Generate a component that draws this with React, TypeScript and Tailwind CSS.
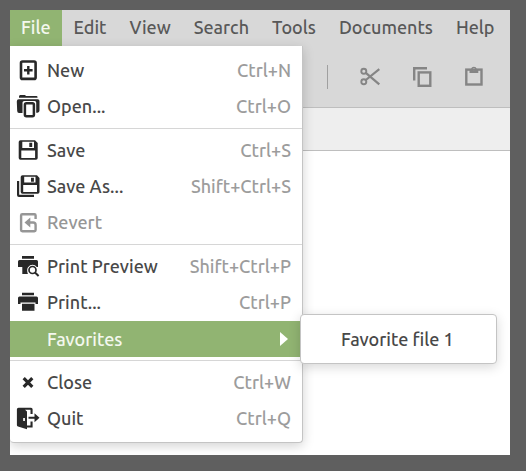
import type { ReactNode } from "react";

const icons = {
  new: (
    <>
      <rect x="5" y="2.5" width="14.6" height="17.4" rx="1.5" fill="none" stroke="currentColor" strokeWidth="2.6" />
      <path d="M12.3 7v8.6M8 11.3h8.6" stroke="currentColor" strokeWidth="2.4" />
    </>
  ),
  open: (
    <>
      <path d="M3 2.800V1.500Q3 0 4.200 0H9l1 1h10.500q1 0 1 1v.8z" fill="currentColor" />
      <path d="M2.800 4.200h18.900q1.800 0 1.800 1.800v9.500q0 2-2 2.300h-1.300V7.500q0-1.500-1.500-1.500H8.200Q6.500 6 6.500 7.500V18H3Q1.300 18 1.200 16L.8 6.500Q.8 4.200 2.800 4.200z" fill="currentColor" />
      <rect x="8.900" y="8.300" width="9" height="13" rx="1.500" fill="none" stroke="currentColor" strokeWidth="2.500" />
    </>
  ),
  save: (
    <path
      fillRule="evenodd"
      fill="currentColor"
      d="M4.500 1.300H19L21.700 4v15q0 1.700-1.700 1.700H4.400q-1.700 0-1.700-1.700V3q0-1.700 1.800-1.700zM6.300 2.700v6.300H18V2.700zM5.300 11.500v7.500h13.800v-7.500zM13.300 3.700h2.900v4.300h-2.900z"
    />
  ),
  saveAs: (
    <>
      <path
        fillRule="evenodd"
        fill="currentColor"
        d="M6.500.3H21L23.500 3v14q0 1.700-1.700 1.700H6.400q-1.700 0-1.700-1.700V2Q4.700.3 6.500.3zM8.200 1.700v5.800h11.300V1.700zM7.200 10v7h13.800v-7zM15 2.700h2.900v4H15z"
      />
      <path d="M2.100 6v14q0 .8.8.8H18" fill="none" stroke="currentColor" strokeWidth="2.200" />
    </>
  ),
  revert: (
    <>
      <path d="M19.600 8V4.500q0-1.200-1.200-1.200H6.300q-1.200 0-1.200 1.200v14.600q0 1.200 1.200 1.200h12.100q1.200 0 1.200-1.200V14q0-2.500-2.500-2.500H13" fill="none" stroke="currentColor" strokeWidth="2.400" />
      <path d="M8.500 11.500l5.800-5v10z" fill="currentColor" />
    </>
  ),
  preview: (
    <>
      <path d="M6 1h12v2.700H6zM3.500 5h17Q22 5 22 6.500V12h-1.200a5.200 5.200 0 0 0-8.500 0H2V6.500Q2 5 3.500 5zM6.300 12h5.800q-1.800 3-.2 7H6.300z" fill="currentColor" />
      <circle cx="16.500" cy="15" r="3.500" fill="none" stroke="currentColor" strokeWidth="1.700" />
      <path d="M19 17.500l3.600 3.400" stroke="currentColor" strokeWidth="2" />
    </>
  ),
  print: (
    <path d="M6 1.700h12v2.600H6zM3.500 5.500h17Q22 5.500 22 7v6h-2.500v-1.500h-15V13H2V7q0-1.500 1.500-1.500zM6 12.700h12.500v7.100H6z" fill="currentColor" />
  ),
  close: <path d="M7.700 7.200l8.600 8.600M16.300 7.200l-8.600 8.600" stroke="currentColor" strokeWidth="3.200" />,
  quit: (
    <>
      <path fillRule="evenodd" fill="currentColor" d="M2.500.7H15q1.600 0 1.600 1.600V7h-2.100V2.700H9L11 4.500V22.200L2 19.500Q.9 19 .9 18V2.300Q.9.700 2.500.7zM7.200 11v3h1.700v-3z" />
      <path d="M11 18.500h3.500v-4h2.100v6H11z" fill="currentColor" />
      <path d="M12.500 9.700h6V6.200l5 4.500-5 4.500v-3.500h-6z" fill="currentColor" />
    </>
  ),
  cut: (
    <g fill="none" stroke="currentColor" strokeWidth="1.900">
      <circle cx="5.800" cy="6.200" r="2.500" />
      <circle cx="5.800" cy="16.700" r="2.500" />
      <path d="M7.800 7.800L21.300 19.300M7.800 15L21.300 4.200" strokeWidth="2.200" />
    </g>
  ),
  copy: (
    <g fill="none" stroke="currentColor" strokeWidth="2.400">
      <path d="M4.200 15.500V3.200H17" />
      <rect x="8.700" y="7.400" width="11.600" height="13.400" />
    </g>
  ),
  paste: (
    <>
      <rect x="4.300" y="4.600" width="15.200" height="14.900" fill="none" stroke="currentColor" strokeWidth="2.400" />
      <path fillRule="evenodd" fill="currentColor" d="M7.500 8V4H9a3 3 0 0 1 5.800 0h1.500v4zM11.900 3a1.200 1.200 0 1 0 .01 0z" />
    </>
  ),
};

type IconName = keyof typeof icons;

function Icon({ name }: { name: IconName }) {
  return (
    <svg viewBox="0 0 24 24" className="size-6 shrink-0 overflow-visible" aria-hidden="true">
      {icons[name]}
    </svg>
  );
}

function MenuItem({ icon, label, shortcut, disabled }: { icon: IconName; label: string; shortcut?: string; disabled?: boolean }) {
  return (
    <button
      type="button"
      role="menuitem"
      disabled={disabled}
      className="flex h-9 w-full items-center pr-[11px] pl-1.5 text-left text-[#484848] disabled:text-[#969696]"
    >
      <span className={disabled ? "" : "text-[#282828]"}>
        <Icon name={icon} />
      </span>
      <span className="ml-[7px] flex-1 pb-0.5">{label}</span>
      {shortcut && <span className="pb-0.5 text-[#9c9c9c]">{shortcut}</span>}
    </button>
  );
}

function Separator() {
  return (
    <div role="separator" className="pt-[3px] pb-1">
      <div className="h-px bg-[#d6d6d6]" />
    </div>
  );
}

function FavoritesItem() {
  return (
    <div className="relative">
      <button
        type="button"
        role="menuitem"
        aria-haspopup="menu"
        aria-expanded="true"
        className="flex h-9 w-full items-center bg-[#91b472] pr-3.5 pl-[37px] text-left text-[#f4f8ef]"
      >
        <span className="flex-1">Favorites</span>
        <svg viewBox="0 0 8 14" className="h-3.5 w-2" aria-hidden="true">
          <path d="M0 0l8 7-8 7z" fill="white" />
        </svg>
      </button>
      <div
        role="menu"
        aria-label="Favorites"
        className="absolute -top-[7px] left-full -ml-0.5 w-[197px] rounded-sm border border-[#c4c4c4] bg-white py-[6px] shadow-[0_3px_12px_rgba(0,0,0,0.16)]"
      >
        <button type="button" role="menuitem" className="h-9 w-full pl-10 text-left text-[#484848]">
          Favorite file 1
        </button>
      </div>
    </div>
  );
}

function FileMenu() {
  return (
    <div
      role="menu"
      aria-label="File"
      className="absolute top-full left-0 z-10 w-[293px] rounded-b-sm border-r border-b border-[#c4c4c4] bg-white pt-[7px] pb-[5px] shadow-[0_3px_12px_rgba(0,0,0,0.18)]"
    >
      <MenuItem icon="new" label="New" shortcut="Ctrl+N" />
      <MenuItem icon="open" label="Open..." shortcut="Ctrl+O" />
      <Separator />
      <MenuItem icon="save" label="Save" shortcut="Ctrl+S" />
      <MenuItem icon="saveAs" label="Save As..." shortcut="Shift+Ctrl+S" />
      <MenuItem icon="revert" label="Revert" disabled />
      <Separator />
      <MenuItem icon="preview" label="Print Preview" shortcut="Shift+Ctrl+P" />
      <MenuItem icon="print" label="Print..." shortcut="Ctrl+P" />
      <FavoritesItem />
      <Separator />
      <MenuItem icon="close" label="Close" shortcut="Ctrl+W" />
      <MenuItem icon="quit" label="Quit" shortcut="Ctrl+Q" />
    </div>
  );
}

function ToolButton({ label, children }: { label: string; children: ReactNode }) {
  return (
    <button type="button" aria-label={label}>
      {children}
    </button>
  );
}

export default function App() {
  return (
    <div className="flex min-h-screen flex-col bg-[#5f5f5f] pt-2.5 pr-4 pb-4 pl-2.5 font-['Ubuntu','Noto_Sans',sans-serif] text-[18px] leading-6 font-medium">
      <main className="flex flex-1 flex-col overflow-hidden bg-white">
        <nav role="menubar" className="relative flex h-9 gap-px bg-[#d8d8d8] text-[#585858]">
          <button type="button" role="menuitem" aria-haspopup="menu" aria-expanded="true" className="bg-[#91b472] px-[11px] pb-0.5 text-[#f4f8ef]">
            File
          </button>
          {["Edit", "View", "Search", "Tools", "Documents", "Help"].map((name) => (
            <button key={name} type="button" role="menuitem" className="px-[11px] pb-0.5">
              {name}
            </button>
          ))}
          <FileMenu />
        </nav>
        <div role="toolbar" className="flex h-[62px] items-center justify-end gap-7 border-b border-[#bebebe] bg-[#d8d8d8] pr-6 text-[#858585]">
          <div className="mr-0.5 h-6 w-px bg-[#a0a0a0]" />
          <ToolButton label="Cut">
            <Icon name="cut" />
          </ToolButton>
          <ToolButton label="Copy">
            <Icon name="copy" />
          </ToolButton>
          <ToolButton label="Paste">
            <Icon name="paste" />
          </ToolButton>
        </div>
        <div className="h-[43px] border-b border-[#bebebe] bg-[#eeeeee]" />
      </main>
    </div>
  );
}
